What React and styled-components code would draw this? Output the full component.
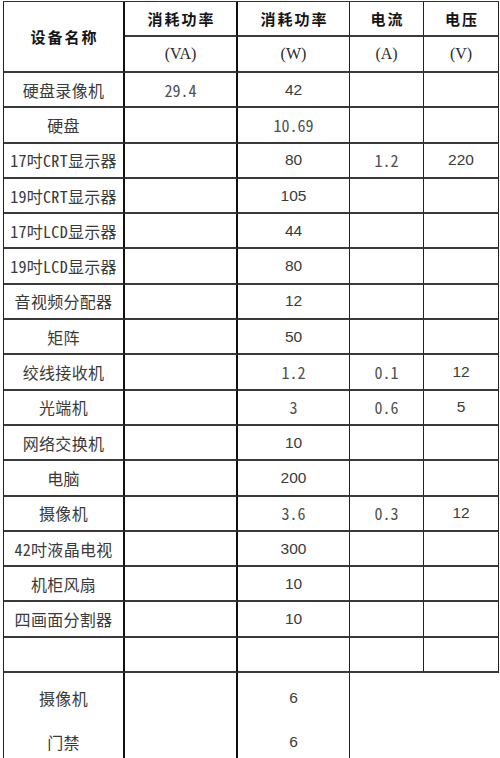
import React from "react";
import styled, { createGlobalStyle } from "styled-components";

const Global = createGlobalStyle`
  html, body { margin: 0; padding: 0; background: #fff; overflow: hidden; }
  body { width: 500px; height: 758px; }
`;

const Page = styled.div`
  padding: 1px 0 0 3px;
`;

const Grid = styled.div`
  display: grid;
  grid-template-columns: 121px 113px 112px 74px 75px;
  grid-template-rows: 35px 36px repeat(17, 35.3px) 49px 40px;
  border-left: 1px solid #222;
  border-top: 1px solid #333;
  width: 495px;
`;

const rightBorders = ["2px solid #111", "2px solid #111", "1px solid #222", "1px solid #222", "1px solid #222"];

const Cell = styled.div`
  box-sizing: border-box;
  display: flex;
  align-items: center;
  justify-content: center;
  border-right: ${(p) => (p.$blank ? "none" : rightBorders[p.$col])};
  border-bottom: ${(p) => (p.$noBottom ? "none" : "2px solid #3a3a3a")};
  grid-row: ${(p) => (p.$span ? `span ${p.$span}` : "auto")};
  color: #3c3c3c;
  white-space: nowrap;
`;

const HeadText = styled.span`
  font-family: "Noto Sans CJK SC", sans-serif;
  font-weight: 700;
  font-size: 15px;
  letter-spacing: 2px;
  color: #151515;
  margin-right: -2px;
`;

const UnitText = styled.span`
  font-family: "Liberation Serif", serif;
  font-size: 16px;
  color: #2a2a2a;
`;

const Label = styled.span`
  font-family: "Noto Sans Mono CJK SC", "Noto Sans CJK SC", sans-serif;
  font-size: 16px;
  letter-spacing: 0.3px;
  color: #3a3a3a;
`;

const Num = styled.span`
  font-family: ${(p) =>
    p.$mono ? '"Noto Sans Mono CJK SC", "DejaVu Sans Mono", monospace' : '"Liberation Sans", sans-serif'};
  font-size: ${(p) => (p.$mono ? "16px" : "15.5px")};
  color: ${(p) => (p.$mono ? "#505050" : "#3a3a3a")};
`;

const rows = [
  ["硬盘录像机", "29.4", "42", "", ""],
  ["硬盘", "", "10.69", "", ""],
  ["17吋CRT显示器", "", "80", "1.2", "220"],
  ["19吋CRT显示器", "", "105", "", ""],
  ["17吋LCD显示器", "", "44", "", ""],
  ["19吋LCD显示器", "", "80", "", ""],
  ["音视频分配器", "", "12", "", ""],
  ["矩阵", "", "50", "", ""],
  ["绞线接收机", "", "1.2", "0.1", "12"],
  ["光端机", "", "3", "0.6", "5"],
  ["网络交换机", "", "10", "", ""],
  ["电脑", "", "200", "", ""],
  ["摄像机", "", "3.6", "0.3", "12"],
  ["42吋液晶电视", "", "300", "", ""],
  ["机柜风扇", "", "10", "", ""],
  ["四画面分割器", "", "10", "", ""],
  ["", "", "", "", ""],
];

const tail = [
  ["摄像机", "", "6"],
  ["门禁", "", "6"],
];

const isMono = (v) => v.includes(".") || v === "3";

function Value({ v }) {
  if (!v) return null;
  return <Num $mono={isMono(v)}>{v}</Num>;
}

export default function App() {
  return (
    <>
      <Global />
      <Page>
        <Grid>
          <Cell $col={0} $span={2}>
            <HeadText>设备名称</HeadText>
          </Cell>
          <Cell $col={1}><HeadText>消耗功率</HeadText></Cell>
          <Cell $col={2}><HeadText>消耗功率</HeadText></Cell>
          <Cell $col={3}><HeadText>电流</HeadText></Cell>
          <Cell $col={4}><HeadText>电压</HeadText></Cell>
          <Cell $col={1}><UnitText>(VA)</UnitText></Cell>
          <Cell $col={2}><UnitText>(W)</UnitText></Cell>
          <Cell $col={3}><UnitText>(A)</UnitText></Cell>
          <Cell $col={4}><UnitText>(V)</UnitText></Cell>
          {rows.map((r, i) =>
            r.map((v, j) => (
              <Cell key={`${i}-${j}`} $col={j}>
                {j === 0 ? v && <Label>{v}</Label> : <Value v={v} />}
              </Cell>
            ))
          )}
          {tail.map((r, i) => (
            <React.Fragment key={`t${i}`}>
              {r.map((v, j) => (
                <Cell key={j} $col={j} $noBottom>
                  {j === 0 ? <Label>{v}</Label> : <Value v={v} />}
                </Cell>
              ))}
              <Cell $col={3} $blank $noBottom />
              <Cell $col={4} $blank $noBottom />
            </React.Fragment>
          ))}
        </Grid>
      </Page>
    </>
  );
}
